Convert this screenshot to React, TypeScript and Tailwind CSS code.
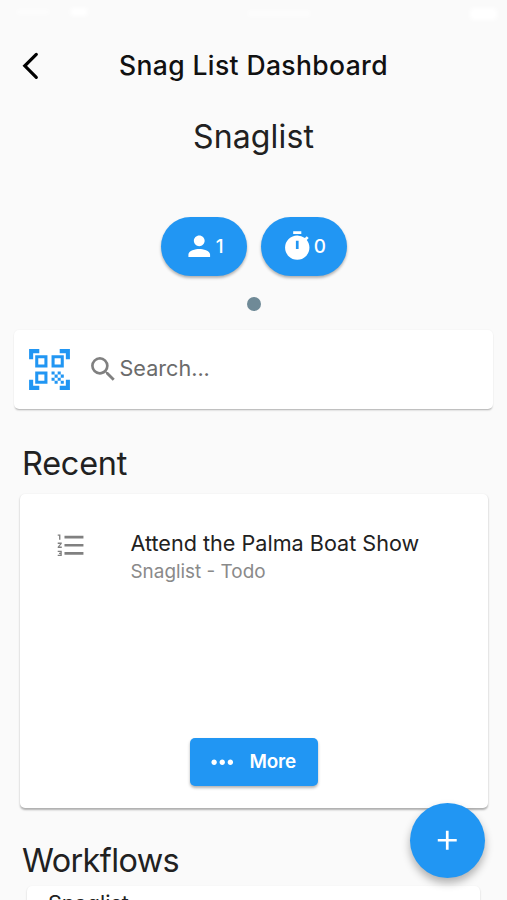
import {
  MdAdd,
  MdFormatListNumbered,
  MdMoreHoriz,
  MdPerson,
  MdQrCodeScanner,
  MdSearch,
} from "react-icons/md";
import type { ReactNode } from "react";

function BackIcon() {
  return (
    <svg
      viewBox="0 0 32 32"
      className="ml-[14px] size-8"
      fill="none"
      stroke="#000"
      strokeWidth="3.2"
      strokeLinecap="round"
    >
      <path d="M22.3 4.4 10.8 15.8l11.5 11.5" />
    </svg>
  );
}

function TimerIcon() {
  return (
    <svg viewBox="0 0 24 24" className="size-[32.5px]" fill="currentColor" fillRule="evenodd">
      <path d="M15 1H9v2h6V1zm4.03 6.39 1.42-1.42c-.43-.51-.9-.99-1.41-1.41l-1.42 1.42A8.96 8.96 0 0 0 12 4a9 9 0 1 0 9 9c0-2.12-.74-4.07-1.97-5.61zM11 8h2v6h-2V8z" />
    </svg>
  );
}

function Chip({ icon, count }: { icon: ReactNode; count: number }) {
  return (
    <button className="flex h-[59px] w-[86px] items-center justify-center rounded-full bg-[#2196f3] text-[18.9px] font-medium text-white shadow-[0_2px_3px_rgba(0,0,0,0.3)]">
      {icon}
      <span className="pt-px">{count}</span>
    </button>
  );
}

function StatusBar() {
  return (
    <div className="flex h-9 items-start justify-between pt-2 pr-[10px] pl-4">
      <div className="flex w-[72px] items-center justify-between">
        <span className="h-[6px] w-[34px] rounded-full bg-white/50 blur-[2px]" />
        <span className="h-[8px] w-[18px] rounded-full bg-white blur-[2px]" />
      </div>
      <span className="mt-[2px] h-[7px] w-[64px] rounded-full bg-white/50 blur-[2px]" />
      <span className="h-[12px] w-[27px] rounded bg-white blur-[2px]" />
    </div>
  );
}

export default function App() {
  return (
    <div className="relative h-[900px] w-full overflow-hidden bg-[#fafafa] font-['Inter','Liberation_Sans',sans-serif] text-[#212121]">
      <StatusBar />
      <header className="grid h-[60px] grid-cols-[62px_1fr_62px] items-center">
        <BackIcon />
        <h1 className="pb-px text-center text-[26.5px] font-medium tracking-[0.38px] whitespace-nowrap text-[#111]">
          Snag List Dashboard
        </h1>
      </header>

      <h2 className="mt-[21px] text-center text-[32px] leading-10 tracking-[0.15px]">Snaglist</h2>

      <div className="mt-[60px] flex justify-center gap-[14px]">
        <Chip icon={<MdPerson className="size-[32.5px]" />} count={1} />
        <Chip icon={<TimerIcon />} count={0} />
      </div>
      <div className="mx-auto mt-[21px] size-[14px] rounded-full bg-[#6f8a97]" />

      <div className="mx-[14px] mt-[19px] flex h-[79px] items-center rounded-[5px] bg-white pl-[11px] shadow-[0_2px_2px_-1px_rgba(0,0,0,0.3),0_0_2px_rgba(0,0,0,0.06)]">
        <MdQrCodeScanner className="size-[49px] text-[#2196f3]" />
        <MdSearch className="ml-[13px] size-[32.5px] text-[#808080]" />
        <span className="pb-[2px] text-[21.6px] text-[#6b6b6b]">Search...</span>
      </div>

      <h2 className="mt-[35px] ml-[22px] text-[32.4px] leading-10 tracking-[-0.2px]">Recent</h2>
      <section className="mr-[19px] ml-5 mt-[10px] flex h-[314px] flex-col items-center justify-between rounded-[5px] bg-white pt-[36px] pb-[22px] shadow-[0_1.5px_2px_rgba(0,0,0,0.3)]">
        <div className="flex w-full pl-[35px]">
          <MdFormatListNumbered className="-mt-px size-[32.5px] text-[#808080]" />
          <div className="ml-[43px] whitespace-nowrap">
            <div className="text-[21.6px] leading-[27px]">Attend the Palma Boat Show</div>
            <div className="pt-px text-[18.9px] leading-[27px] text-[#8a8a8a]">Snaglist - Todo</div>
          </div>
        </div>
        <button className="flex h-[48px] w-[128px] items-center rounded-[5px] bg-[#2196f3] pl-4 text-[18.9px] font-semibold tracking-[-0.2px] text-white shadow-[0_2px_3px_rgba(0,0,0,0.3)]">
          <MdMoreHoriz className="size-[32.5px]" />
          <span className="ml-[11px] pt-px">More</span>
        </button>
      </section>

      <h2 className="mt-[33px] ml-[22px] text-[32.4px] leading-10 tracking-[-0.6px]">Workflows</h2>
      <section className="mx-[27px] mt-[5px] h-20 rounded-[5px] bg-white pl-[21px] shadow-[0_1px_2px_rgba(0,0,0,0.2)]">
        <div className="pt-[4px] text-[21.6px] leading-[27px]">Snaglist</div>
      </section>

      <button className="absolute top-[803px] left-[410px] flex size-[75px] items-center justify-center rounded-full bg-[#2196f3] text-white shadow-[0_5px_8px_rgba(0,0,0,0.3)]">
        <MdAdd className="size-[32.5px]" />
      </button>
    </div>
  );
}
